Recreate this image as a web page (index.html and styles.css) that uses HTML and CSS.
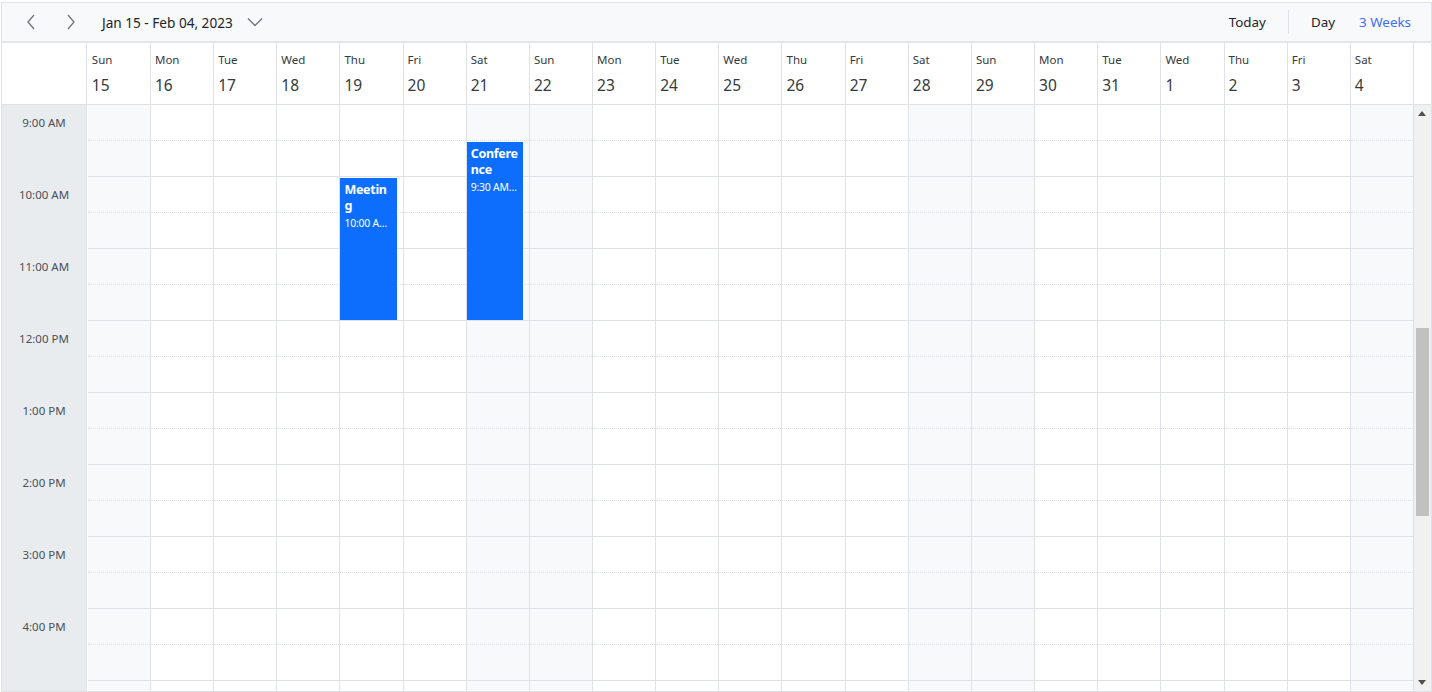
FILE: index.html
```html
<!DOCTYPE html>
<html>
<head>
<meta charset="utf-8">
<link rel="stylesheet" href="styles.css">
</head>
<body>
<div class="scheduler">
  <div class="toolbar">
    <div class="tb-left">
      <button class="icon-btn" aria-label="Previous"><svg width="12" height="16" viewBox="0 0 12 16"><path d="M9 1 L3 8 L9 15" fill="none" stroke="#6c757d" stroke-width="1.3"/></svg></button>
      <button class="icon-btn" aria-label="Next"><svg width="12" height="16" viewBox="0 0 12 16"><path d="M3 1 L9 8 L3 15" fill="none" stroke="#6c757d" stroke-width="1.3"/></svg></button>
      <button class="date-btn"><span class="date-text">Jan 15 - Feb 04, 2023</span><svg class="caret" width="16" height="10" viewBox="0 0 16 10"><path d="M1 1.5 L8 8.5 L15 1.5" fill="none" stroke="#6c757d" stroke-width="1.3"/></svg></button>
    </div>
    <div class="tb-right">
      <button class="tb-btn">Today</button>
      <span class="sep"></span>
      <button class="tb-btn">Day</button>
      <button class="tb-btn active">3 Weeks</button>
    </div>
  </div>
  <div class="header" id="header">
    <div class="corner"></div>
  </div>
  <div class="body">
    <div class="times" id="times"></div>
    <div class="days" id="days"></div>
    <div class="scrollbar">
      <span class="arrow up"></span>
      <div class="thumb"></div>
      <span class="arrow down"></span>
    </div>
  </div>
</div>
<script src="app.js"></script>
</body>
</html>
```
FILE: styles.css
```css
* { box-sizing: border-box; }
html, body { margin: 0; padding: 0; background: #fff; }
body {
  font-family: "Noto Sans", "Open Sans", Arial, sans-serif;
  color: #212529;
  padding: 2px 0 0 1px;
}
button { font-family: inherit; background: none; border: 0; padding: 0; cursor: pointer; color: inherit; }

.scheduler {
  width: 1431px;
  height: 690px;
  border: 1px solid #dee2e6;
  display: flex;
  flex-direction: column;
  overflow: hidden;
}

.toolbar {
  height: 40px;
  flex: none;
  background: #f8f9fa;
  border-bottom: 2px solid #e4e7ea;
  display: flex;
  align-items: center;
  justify-content: space-between;
}
.tb-left { display: flex; align-items: center; padding-left: 9px; }
.icon-btn { width: 40px; height: 38px; display: flex; align-items: center; justify-content: center; }
.date-btn { display: flex; align-items: center; margin-left: 11px; font-size: 13.6px; color: #212529; }
.caret { margin-left: 14px; }
.tb-right { display: flex; align-items: center; padding-right: 8px; }
.tb-btn { font-size: 13.4px; padding: 0 12px; height: 38px; color: #212529; }
.tb-btn.active { color: #3d70f5; }
.sep { width: 1px; height: 24px; background: #dee2e6; margin: 0 10px; }

.header {
  height: 62px;
  flex: none;
  display: grid;
  grid-template-columns: 85.85px repeat(21, 1fr) 17px;
  border-bottom: 1px solid #dee2e6;
}
.corner { width: 85px; border-right: 1px solid #dee2e6; }
.hcell { border-right: 1px solid #dee2e6; padding: 9px 0 0 4px; }
.hcell .dname { font-size: 11.5px; line-height: 16px; color: #343a40; }
.hcell .dnum { font-size: 15.5px; line-height: 20px; margin-top: 7px; color: #343a40; }

.body {
  flex: 1;
  display: grid;
  grid-template-columns: 85.85px 1fr 17px;
  overflow: hidden;
}
.times { width: 85px; background: #e9ecef; border-right: 1px solid #dee2e6; overflow: hidden; }
.tlabel { height: 72px; text-align: center; font-size: 11.5px; color: #495057; padding-top: 10px; line-height: 16px; }
.days { display: grid; grid-template-columns: repeat(21, 1fr); overflow: hidden; }
.dcol { position: relative; border-right: 1px solid #dee2e6; }
.dcol.weekend { background: #f8f9fa; }
.slot { height: 36px; border-bottom: 1px dotted #dee2e6; }
.slot.hour { border-bottom: 1px solid #dee2e6; }

.event {
  position: absolute;
  left: 0;
  width: 56.5px;
  background: #0d6efd;
  color: #fff;
  padding: 4px 5px 4px 4px;
  overflow: hidden;
}
.event .title { font-weight: 700; font-size: 12.5px; line-height: 16px; letter-spacing: -0.3px; word-break: break-all; }
.event .etime { font-size: 10.4px; line-height: 13px; margin-top: 3px; margin-right: 0; letter-spacing: -0.2px; white-space: nowrap; overflow: hidden; text-overflow: ellipsis; }

.scrollbar { background: #f1f1f1; position: relative; }
.thumb { position: absolute; left: 2px; right: 2px; top: 223px; height: 188px; background: #c1c1c1; }
.arrow { position: absolute; left: 4px; width: 0; height: 0; border-left: 4px solid transparent; border-right: 4px solid transparent; }
.arrow.up { top: 6px; border-bottom: 5px solid #505050; }
.arrow.down { bottom: 6px; border-top: 5px solid #505050; }
```
FILE: app.js
```js
(function () {
  var names = ['Sun','Mon','Tue','Wed','Thu','Fri','Sat'];
  var nums = [15,16,17,18,19,20,21,22,23,24,25,26,27,28,29,30,31,1,2,3,4];
  var header = document.getElementById('header');
  var days = document.getElementById('days');
  var times = document.getElementById('times');
  var events = {
    4: { title: 'Meeting', time: '10:00 AM - 12:00 PM', top: 73, height: 142 },
    6: { title: 'Conference', time: '9:30 AM - 12:00 PM', top: 37, height: 178 }
  };
  nums.forEach(function (n, i) {
    var h = document.createElement('div');
    h.className = 'hcell';
    h.innerHTML = '<div class="dname">' + names[i % 7] + '</div><div class="dnum">' + n + '</div>';
    header.appendChild(h);
    var c = document.createElement('div');
    c.className = 'dcol' + ((i % 7 === 0 || i % 7 === 6) ? ' weekend' : '');
    var html = '';
    for (var s = 0; s < 18; s++) {
      html += '<div class="slot' + (s % 2 ? ' hour' : '') + '"></div>';
    }
    c.innerHTML = html;
    var ev = events[i];
    if (ev) {
      var e = document.createElement('div');
      e.className = 'event';
      e.style.top = ev.top + 'px';
      e.style.height = ev.height + 'px';
      e.innerHTML = '<div class="title">' + ev.title + '</div><div class="etime">' + ev.time + '</div>';
      c.appendChild(e);
    }
    days.appendChild(c);
  });
  header.appendChild(document.createElement('div'));
  var labels = ['9:00 AM','10:00 AM','11:00 AM','12:00 PM','1:00 PM','2:00 PM','3:00 PM','4:00 PM','5:00 PM'];
  labels.forEach(function (l) {
    var t = document.createElement('div');
    t.className = 'tlabel';
    t.textContent = l;
    times.appendChild(t);
  });
})();
```
